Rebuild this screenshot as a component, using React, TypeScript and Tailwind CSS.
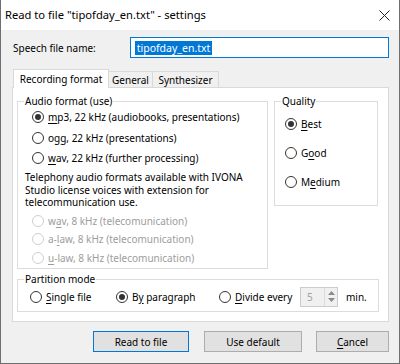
import React from "react";

function U({ children }: { children: React.ReactNode }) {
  return <span className="underline decoration-1 underline-offset-[2px]">{children}</span>;
}

function Radio({
  checked,
  disabled,
  children,
  className = "",
}: {
  checked?: boolean;
  disabled?: boolean;
  children: React.ReactNode;
  className?: string;
}) {
  return (
    <div className={`flex items-center gap-[4px] ${className}`}>
      <span
        className={`w-[12px] h-[12px] shrink-0 rounded-full border bg-white flex items-center justify-center ${
          disabled ? "border-[#cfcfcf]" : "border-[#333333]"
        }`}
      >
        {checked && <span className="w-[6px] h-[6px] rounded-full bg-[#333333]" />}
      </span>
      <span className={`whitespace-nowrap leading-[14px] ${disabled ? "text-[#9d9d9d]" : "text-black"}`}>
        {children}
      </span>
    </div>
  );
}

export default function App() {
  return (
    <div className="w-[400px] h-[364px] bg-[#f0f0f0] border-x border-b border-[#6e6e6e] flex flex-col text-[10px] text-black font-['Noto_Sans',sans-serif]">
      {/* Title bar */}
      <div className="h-[30px] shrink-0 bg-white flex items-center justify-between pl-[4px] pr-[9px]">
        <span className="text-[11.2px] leading-[16px] whitespace-nowrap">
          Read to file "tipofday_en.txt" - settings
        </span>
        <svg width="11" height="11" viewBox="0 0 11 11">
          <path d="M0.5 0.5 L10.5 10.5 M10.5 0.5 L0.5 10.5" stroke="#222" strokeWidth="1" fill="none" />
        </svg>
      </div>

      <div className="flex flex-col pl-[11px] pr-[10px]">
        {/* file name row */}
        <div className="flex items-center mt-[7px] h-[21px]">
          <span className="w-[118px] pl-[1px] leading-[14px]">Speech file name:</span>
          <div className="w-[260px] h-[21px] border border-[#0078d7] bg-white flex items-center pl-[4px]">
            <span className="bg-[#0078d7] text-white text-[10.5px] leading-[14px] px-[2px]">tipofday_en.txt</span>
          </div>
        </div>

        {/* Tabs */}
        <div className="flex items-end mt-[11px] pl-[1px] h-[18px] relative z-10">
          <div className="w-[96px] h-[19px] -mb-px bg-white border-x border-t border-[#d9d9d9] flex items-center justify-center leading-[14px] pb-[1px] whitespace-nowrap">
            Recording format
          </div>
          <div className="w-[44px] h-[16px] bg-[#f0f0f0] border-t border-r border-[#d9d9d9] flex items-center justify-center leading-[14px] pt-[1px] whitespace-nowrap">
            General
          </div>
          <div className="w-[66px] h-[16px] bg-[#f0f0f0] border-t border-r border-[#d9d9d9] flex items-center justify-center leading-[14px] pt-[1px] whitespace-nowrap">
            Synthesizer
          </div>
        </div>

        {/* Tab panel */}
        <div className="w-[377px] h-[235px] bg-white border border-[#d9d9d9] pt-[7px] pl-[4px] pr-[9px] flex flex-col">
          <div className="flex gap-[6px] items-start">
            {/* Audio format */}
            <fieldset className="w-[251px] min-w-0 shrink-0 h-[174px] border border-[#dcdcdc] p-0">
              <legend className="ml-[6px] px-[1px] leading-[12px]">Audio format (use)</legend>
              <div className="pl-[14px] flex flex-col">
                <Radio checked className="h-[20px]">
                  <U>m</U>p3, 22 kHz (audiobooks, presentations)
                </Radio>
                <Radio className="h-[21px]">
                  o<U>g</U>g, 22 kHz (presentations)
                </Radio>
                <Radio className="h-[20px]">
                  <U>w</U>av, 22 kHz (further processing)
                </Radio>
                <div className="mt-[3px] -ml-[7px] leading-[12.5px] whitespace-nowrap">
                  Telephony audio formats available with IVONA
                  <br />
                  Studio license voices with extension for
                  <br />
                  telecommunication use.
                </div>
                <div className="mt-[3px] flex flex-col">
                  <Radio disabled className="h-[18.5px]">
                    w<U>a</U>v, 8 kHz (telecomunication)
                  </Radio>
                  <Radio disabled className="h-[18.5px]">
                    a-<U>l</U>aw, 8 kHz (telecomunication)
                  </Radio>
                  <Radio disabled className="h-[18.5px]">
                    <U>u</U>-law, 8 kHz (telecomunication)
                  </Radio>
                </div>
              </div>
            </fieldset>

            {/* Quality */}
            <fieldset className="w-[104px] min-w-0 shrink-0 h-[111px] border border-[#dcdcdc] p-0">
              <legend className="ml-[6px] px-[1px] leading-[12px]">Quality</legend>
              <div className="pl-[10px] pt-[2px] flex flex-col">
                <Radio checked className="h-[29px]">
                  <U>B</U>est
                </Radio>
                <Radio className="h-[29px]">
                  G<U>o</U>od
                </Radio>
                <Radio className="h-[29px]">
                  M<U>e</U>dium
                </Radio>
              </div>
            </fieldset>
          </div>

          {/* Partition mode */}
          <fieldset className="mt-[4px] w-[362px] min-w-0 h-[39px] border border-[#dcdcdc] p-0">
            <legend className="ml-[6px] px-[1px] leading-[12px]">Partition mode</legend>
            <div className="pl-[12px] mt-[1px] h-[21px] flex items-center">
              <Radio className="w-[86px]">
                <U>S</U>ingle file
              </Radio>
              <Radio checked className="w-[103px]">
                B<U>y</U> paragraph
              </Radio>
              <Radio className="w-[81px]">
                <U>D</U>ivide every
              </Radio>
              <div className="w-[38px] h-[20px] border border-[#cccccc] bg-[#f0f0f0] flex">
                <span className="flex-1 pl-[6px] leading-[18px] text-[#a0a0a0]">5</span>
                <div className="w-[13px] border-l border-[#dcdcdc] flex flex-col items-center justify-center">
                  <svg width="7" height="4" viewBox="0 0 7 4" className="mb-[3px]">
                    <path d="M0 4 L3.5 0 L7 4 Z" fill="#8a8a8a" />
                  </svg>
                  <svg width="7" height="4" viewBox="0 0 7 4">
                    <path d="M0 0 L3.5 4 L7 0 Z" fill="#8a8a8a" />
                  </svg>
                </div>
              </div>
              <span className="ml-[8px] leading-[14px]">min.</span>
            </div>
          </fieldset>
        </div>

        {/* Buttons */}
        <div className="flex mt-[9px] pl-[81px] h-[21px]">
          <button className="w-[96px] h-[21px] bg-[#e1e1e1] border border-[#0078d7] leading-[14px]">
            Read to file
          </button>
          <button className="ml-[15px] w-[98px] h-[21px] bg-[#e1e1e1] border border-[#adadad] leading-[14px]">
            Use default
          </button>
          <button className="ml-[14px] w-[73px] h-[21px] bg-[#e1e1e1] border border-[#adadad] leading-[14px]">
            <U>C</U>ancel
          </button>
        </div>
      </div>
    </div>
  );
}
